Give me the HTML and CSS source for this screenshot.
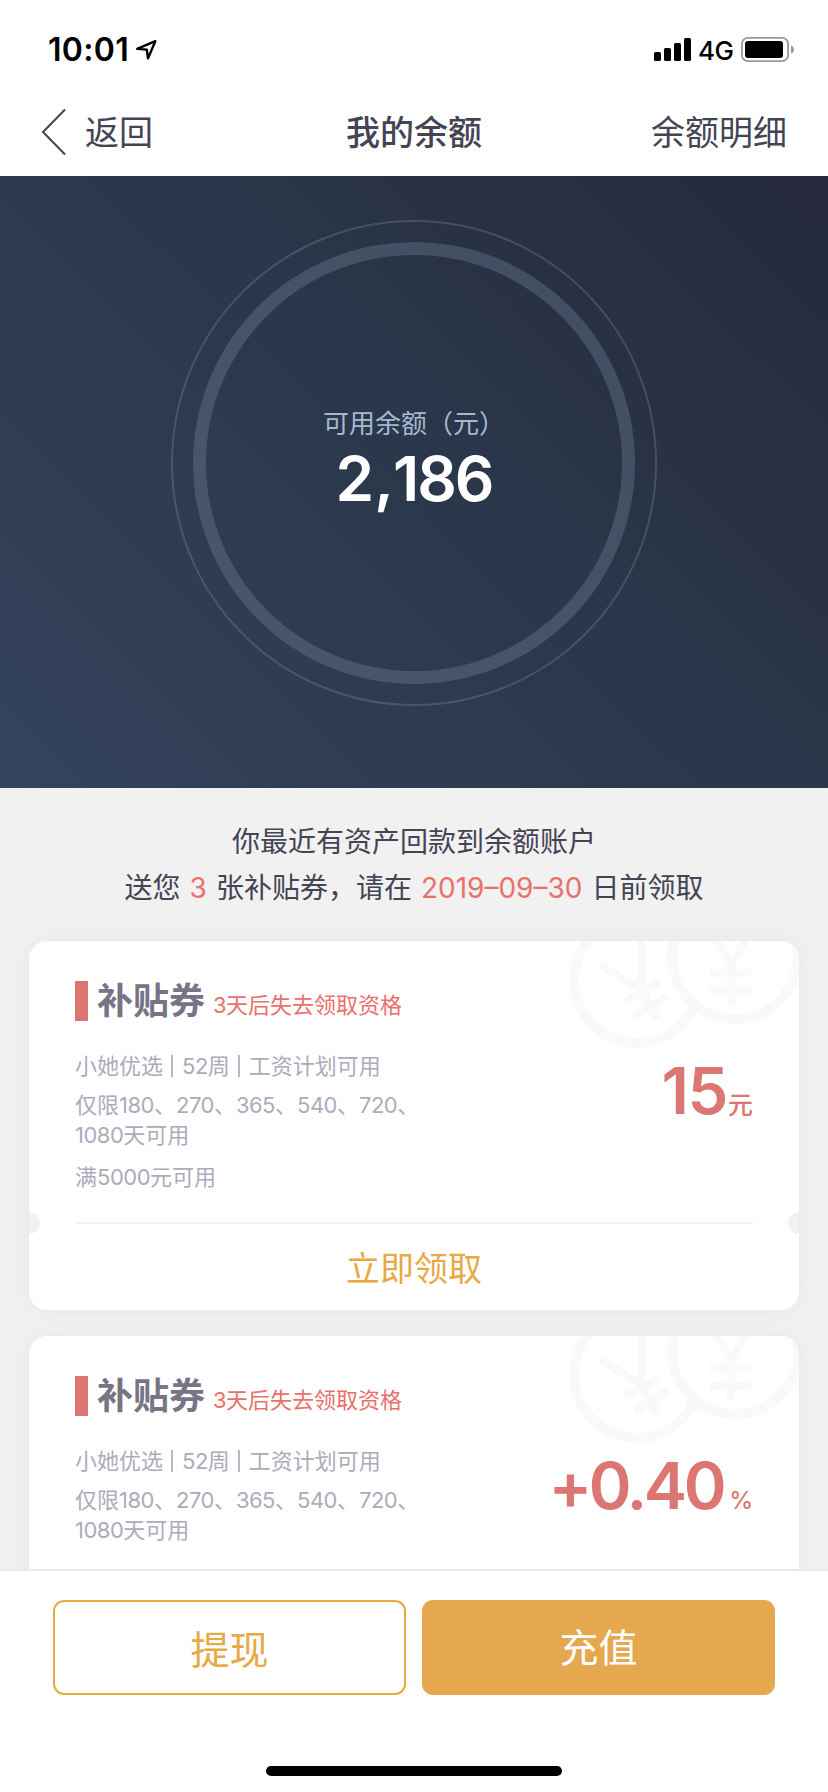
FILE: index.html
```html
<!DOCTYPE html>
<html lang="zh-CN">
<head>
<meta charset="utf-8">
<title>我的余额</title>
<link rel="stylesheet" href="styles.css">
</head>
<body>
<div class="screen">
  <header class="status">
    <div class="status-left">
      <span class="time">10:01</span>
      <svg class="loc" width="23" height="22" viewBox="0 0 23 22"><path d="M2.2 9.8 20.3 2.2 13 19.4 11.8 10.6Z" fill="none" stroke="#000" stroke-width="2.4" stroke-linejoin="round"/></svg>
    </div>
    <div class="status-right">
      <svg width="37" height="23" viewBox="0 0 37 23"><rect y="14" width="7" height="9" rx="1.6"/><rect x="10" y="10" width="7" height="13" rx="1.6"/><rect x="20" y="5" width="7" height="18" rx="1.6"/><rect x="30" width="7" height="23" rx="1.6"/></svg>
      <span class="net">4G</span>
      <svg width="53" height="25" viewBox="0 0 53 25"><rect x=".9" y=".9" width="46.2" height="23.2" rx="6" fill="none" stroke="#999" stroke-width="1.8"/><rect x="4" y="4" width="38" height="17" rx="3"/><path d="M50 8.5Q53 9.5 53 12.5T50 16.500Z" fill="#999"/></svg>
    </div>
  </header>
  <nav class="nav">
    <div class="back">
      <svg width="26" height="48" viewBox="0 0 26 48"><path d="M24 1.500 2 24 24 46.500" fill="none" stroke="#454455" stroke-width="2"/></svg>
      <span class="nav-text">返回</span>
    </div>
    <h1 class="nav-title nav-text">我的余额</h1>
    <span class="nav-more nav-text">余额明细</span>
  </nav>
  <section class="hero">
    <div class="ring-outer">
      <div class="ring">
        <div class="label">可用余额（元）</div>
        <div class="balance">2<span class="comma">,</span>186</div>
      </div>
    </div>
  </section>
  <main class="content">
    <p class="notice">你最近有资产回款到余额账户<br>送您<em class="count">3</em>张补贴券，请在<em class="date">2019–09–30</em>日前领取</p>
    <article class="card">
      <svg class="mark" width="239" height="120" viewBox="560 941 239 120"><use href="#coins"/></svg>
      <div class="card-head"><i class="bar"></i><h2>补贴券</h2><span class="expire"><span class="n">3</span>天后失去领取资格</span></div>
      <div class="card-body">
        <div class="terms">
          <p class="plan"><span>小她优选</span><i class="sep"></i><span><span class="n">52</span>周</span><i class="sep"></i><span>工资计划可用</span></p>
          <p class="days">仅限<span class="n">180</span>、<span class="n">270</span>、<span class="n">365</span>、<span class="n">540</span>、<span class="n">720</span>、<br><span class="n">1080</span>天可用</p>
          <p class="min">满<span class="n">5000</span>元可用</p>
        </div>
        <div class="value"><span class="amount">15</span><span class="unit">元</span></div>
      </div>
      <div class="tear"></div>
      <div class="claim">立即领取</div>
    </article>
    <article class="card">
      <svg class="mark" width="239" height="120" viewBox="560 941 239 120"><use href="#coins"/></svg>
      <div class="card-head"><i class="bar"></i><h2>补贴券</h2><span class="expire"><span class="n">3</span>天后失去领取资格</span></div>
      <div class="card-body">
        <div class="terms">
          <p class="plan"><span>小她优选</span><i class="sep"></i><span><span class="n">52</span>周</span><i class="sep"></i><span>工资计划可用</span></p>
          <p class="days">仅限<span class="n">180</span>、<span class="n">270</span>、<span class="n">365</span>、<span class="n">540</span>、<span class="n">720</span>、<br><span class="n">1080</span>天可用</p>
        </div>
        <div class="value"><span class="amount rate">+0.40</span><span class="unit">%</span></div>
      </div>
    </article>
  </main>
  <footer class="footer">
    <div class="actions">
      <div class="btn btn-line">提现</div>
      <div class="btn btn-fill">充值</div>
    </div>
    <div class="home"></div>
  </footer>
</div>
<svg class="defs" width="0" height="0">
  <defs>
    <g id="coins" fill="none" stroke="#f9f9f9">
      <circle cx="637" cy="980" r="63" stroke-width="10"/>
      <path d="M600 965 641 989M641 941V989L657 1019M625 1002 660 982M634 1016 668 996" stroke-width="8"/>
      <circle cx="735" cy="956" r="63" stroke-width="10" fill="#fff"/>
      <path d="M713 933 731 966 749 933M731 964V1005M710 973H751M710 991H751" stroke-width="8"/>
    </g>
  </defs>
</svg>
</body>
</html>
```
FILE: styles.css
```css
* { box-sizing: border-box; margin: 0; padding: 0; }
body {
  width: 828px;
  background: #fff;
  color: #454455;
  font-family: Inter, "Noto Sans CJK SC", sans-serif;
}
em, i { font-style: normal; }
svg { display: block; flex: none; }
.defs { position: absolute; }
.screen { display: flex; flex-direction: column; width: 828px; height: 1792px; overflow: hidden; }

.status { display: flex; justify-content: space-between; height: 88px; padding: 30px 34px 0 48px; color: #000; }
.status-left, .status-right { display: flex; align-items: center; height: 39px; }
.time { font-size: 32px; font-weight: 600; line-height: 39px; letter-spacing: 0.3px; }
.loc { margin-left: 6px; }
.net { width: 36px; margin: 3px 7px 0 7px; font-size: 26px; font-weight: 450; line-height: 36px; letter-spacing: -0.6px; white-space: nowrap; }

.nav { display: grid; grid-template-columns: 1fr auto 1fr; align-items: center; height: 88px; padding: 0 41px; font-size: 34px; line-height: 48px; }
.back { display: flex; align-items: center; gap: 18px; }
.nav-text { padding-top: 1px; }
.nav-title { font-size: 34px; font-weight: 500; }
.nav-more { text-align: right; }

.hero { display: flex; justify-content: center; height: 612px; padding-top: 44px; background: linear-gradient(45deg, #33445c 0%, #2f3c53 28%, #2b384b 50%, #25293b 100%); }
.ring-outer { width: 486px; height: 486px; padding: 20px; border: 2px solid rgba(135, 150, 170, .3); border-radius: 50%; }
.ring { display: flex; flex-direction: column; align-items: center; width: 442px; height: 442px; padding-top: 151px; border: 13px solid rgba(130, 148, 170, .3); border-radius: 50%; }
.label { color: #a2bbd3; font-size: 26px; line-height: 36px; }
.balance { margin-top: -1px; color: #fff; font-size: 62px; font-weight: 600; line-height: 76px; letter-spacing: -2px; }
.comma { margin: 0 1px 0 2px; }

.content { flex: none; height: 781px; padding: 31px 29px 0; overflow: hidden; background: #f1f1f1; }
.notice { font-size: 28px; line-height: 46px; text-align: center; }
.notice em { color: #e9706b; }
.count { margin: 0 9px; }
.date { margin: 0 9px; }

.card { position: relative; height: 369px; margin-top: 30px; overflow: hidden; padding: 40px 46px 0; border-radius: 18px; background: #fff; box-shadow: 0 0 22px rgba(0, 0, 0, .05); }
.card + .card { margin-top: 26px; }
.mark { position: absolute; top: 0; right: 0; }
.card-head { position: relative; display: flex; height: 40px; align-items: center; }
.bar { width: 13px; height: 40px; background: #db7672; }
.card-head h2 { margin-left: 9px; color: #767485; font-size: 36px; font-weight: 600; line-height: 40px; }
.expire { margin: 8px 0 0 8px; color: #e9706b; font-size: 22px; line-height: 30px; }
.n { letter-spacing: -0.5px; }
.card-body { display: flex; justify-content: space-between; height: 201px; padding-top: 30px; color: #adabbb; font-size: 22px; line-height: 30px; }
.plan { display: flex; align-items: center; }
.sep { width: 2px; height: 22px; margin: 0 9px 0 8px; background: #b9b7c5; }
.days { margin-top: 9px; white-space: nowrap; }
.min { margin-top: 12px; }
.value { display: flex; align-items: baseline; height: 80px; color: #db7672; line-height: 80px; }
.amount { font-size: 65px; font-weight: 600; letter-spacing: -1.5px; }
.rate { letter-spacing: -3.4px; }
.unit { margin-left: 1px; font-size: 25px; font-weight: 500; }
.rate + .unit { margin-left: 6px; font-size: 24px; }
.tear { height: 2px; background: #f1f1f1; }
.tear::before, .tear::after { position: absolute; top: 271px; width: 22px; height: 22px; border-radius: 50%; background: #f1f1f1; content: ""; }
.tear::before { left: -11px; }
.tear::after { right: -11px; }
.claim { color: #e8a945; font-size: 34px; line-height: 89px; text-align: center; }

.footer { flex: 1; border-top: 2px solid #ebebeb; background: #fff; }
.actions { display: flex; gap: 16px; padding: 29px 53px 0; }
.btn { width: 353px; height: 95px; border-radius: 11px; font-size: 39px; text-align: center; }
.btn-line { border: 2px solid #e8a945; color: #e8a945; line-height: 95px; }
.btn-fill { background: #e6a84e; color: #fff; line-height: 95px; }
.home { width: 296px; height: 10px; margin: 71px auto 0; border-radius: 5px; background: #000; }
```
